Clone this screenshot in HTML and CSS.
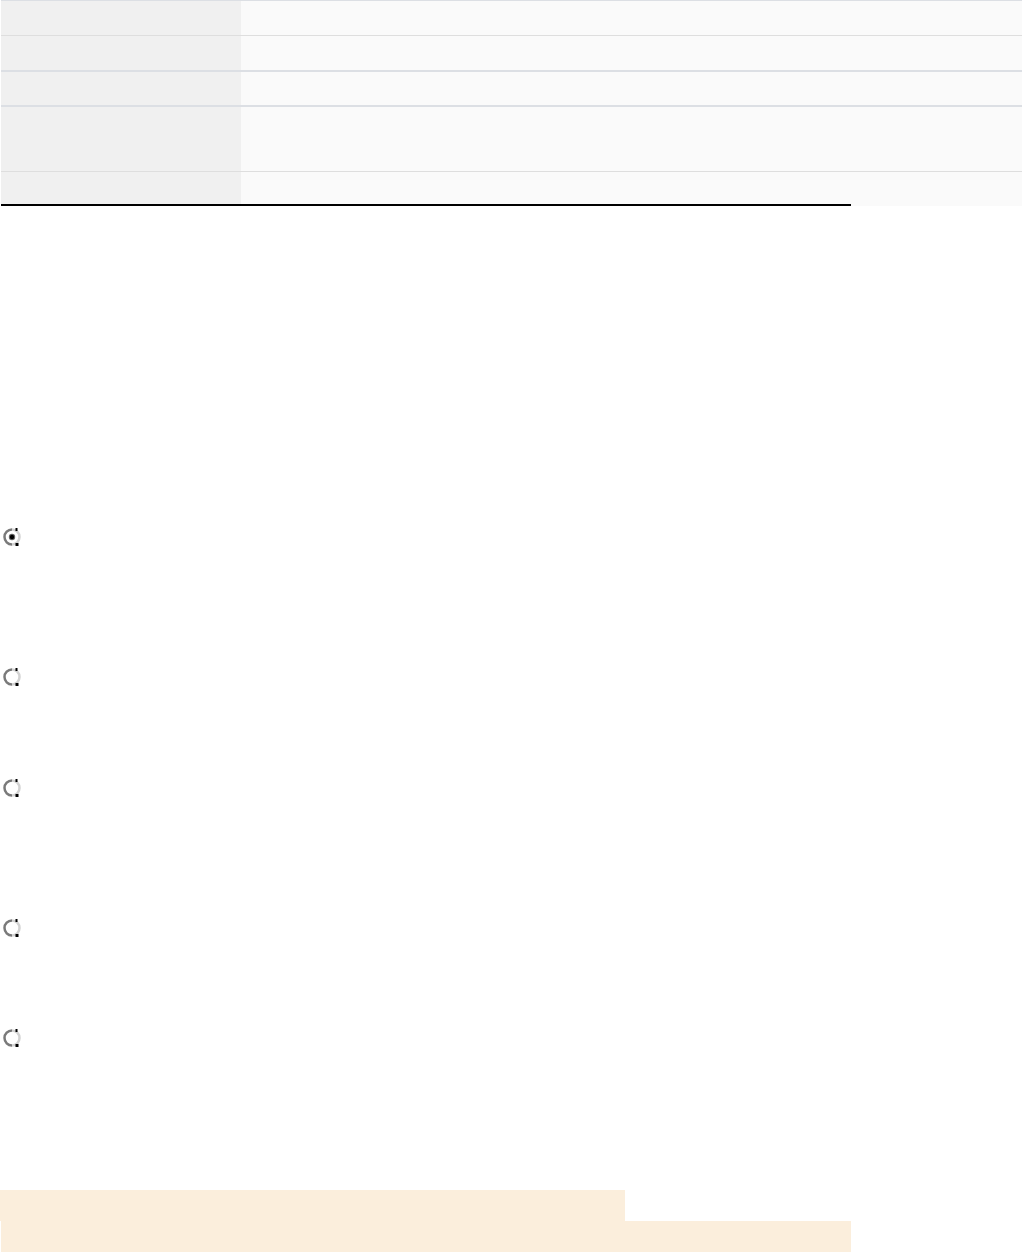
FILE: index.html
```html
<!DOCTYPE html>
<html>
<head>
<meta charset="utf-8">
<link rel="stylesheet" href="styles.css">
</head>
<body>
<div class="table">
  <div class="row r1"><div class="label"></div><div class="value"></div></div>
  <div class="row r2 thick"><div class="label"></div><div class="value"></div></div>
  <div class="row r3 thick"><div class="label"></div><div class="value"></div></div>
  <div class="row r4"><div class="label"></div><div class="value"></div></div>
  <div class="row r5 last"><div class="label"></div><div class="value"></div></div>
</div>
<div class="rule"></div>

<div class="options">
  <div class="opt tall"><svg class="radio" width="18" height="20" viewBox="0 0 18 20"><circle cx="9" cy="10" r="7.5" fill="#fff"/><path d="M9 2.5 A7.5 7.5 0 0 0 9 17.5" fill="none" stroke="#7a7a7a" stroke-width="2.5"/><path d="M9 2.5 A7.5 7.5 0 0 1 9 17.5" fill="none" stroke="#d2d2d2" stroke-width="2.5"/><rect x="12.5" y="1" width="2" height="3" fill="#000"/><rect x="12.5" y="16" width="3" height="3" fill="#000"/><circle cx="9" cy="10" r="3.2" fill="#666"/><circle cx="9" cy="10" r="2.2" fill="#000"/></svg></div>
  <div class="opt short1"><svg class="radio" width="18" height="20" viewBox="0 0 18 20"><circle cx="9" cy="10" r="7.5" fill="#fff"/><path d="M9 2.5 A7.5 7.5 0 0 0 9 17.5" fill="none" stroke="#7a7a7a" stroke-width="2.5"/><path d="M9 2.5 A7.5 7.5 0 0 1 9 17.5" fill="none" stroke="#d2d2d2" stroke-width="2.5"/><rect x="12.5" y="1" width="2" height="3" fill="#000"/><rect x="12.5" y="16" width="3" height="3" fill="#000"/></svg></div>
  <div class="opt tall"><svg class="radio" width="18" height="20" viewBox="0 0 18 20"><circle cx="9" cy="10" r="7.5" fill="#fff"/><path d="M9 2.5 A7.5 7.5 0 0 0 9 17.5" fill="none" stroke="#7a7a7a" stroke-width="2.5"/><path d="M9 2.5 A7.5 7.5 0 0 1 9 17.5" fill="none" stroke="#d2d2d2" stroke-width="2.5"/><rect x="12.5" y="1" width="2" height="3" fill="#000"/><rect x="12.5" y="16" width="3" height="3" fill="#000"/></svg></div>
  <div class="opt short2"><svg class="radio" width="18" height="20" viewBox="0 0 18 20"><circle cx="9" cy="10" r="7.5" fill="#fff"/><path d="M9 2.5 A7.5 7.5 0 0 0 9 17.5" fill="none" stroke="#7a7a7a" stroke-width="2.5"/><path d="M9 2.5 A7.5 7.5 0 0 1 9 17.5" fill="none" stroke="#d2d2d2" stroke-width="2.5"/><rect x="12.5" y="1" width="2" height="3" fill="#000"/><rect x="12.5" y="16" width="3" height="3" fill="#000"/></svg></div>
  <div class="opt final"><svg class="radio" width="18" height="20" viewBox="0 0 18 20"><circle cx="9" cy="10" r="7.5" fill="#fff"/><path d="M9 2.5 A7.5 7.5 0 0 0 9 17.5" fill="none" stroke="#7a7a7a" stroke-width="2.5"/><path d="M9 2.5 A7.5 7.5 0 0 1 9 17.5" fill="none" stroke="#d2d2d2" stroke-width="2.5"/><rect x="12.5" y="1" width="2" height="3" fill="#000"/><rect x="12.5" y="16" width="3" height="3" fill="#000"/></svg></div>
</div>

<div class="notice">
  <div class="line one"></div>
  <div class="line two"></div>
</div>
</body>
</html>
```
FILE: styles.css
```css
html, body {
  margin: 0;
  padding: 0;
  background: #fff;
  font-family: "Liberation Sans", Arial, sans-serif;
}
.table {
  margin-left: 1px;
  width: 1021px;
  border-top: 1px solid #dcdfe4;
}
.row {
  display: grid;
  grid-template-columns: 240px 1fr;
  border-bottom: 1px solid #dedede;
}
.row.thick {
  border-bottom: 2px solid #dcdfe4;
}
.row.last {
  border-bottom: none;
}
.label { background: #f0f0f0; }
.value { background: #fafafa; }
.r1 { height: 34px; }
.r2 { height: 34px; }
.r3 { height: 33px; }
.r4 { height: 64px; }
.r5 { height: 34px; }
.rule {
  margin-left: 1px;
  margin-top: -2px;
  width: 850px;
  height: 2px;
  background: #000;
  position: relative;
}
.options {
  margin-top: 321px;
  padding-left: 3px;
}
.opt { display: flex; align-items: flex-start; }
.radio { display: block; }
.tall { height: 140px; }
.short1 { height: 111px; }
.short2 { height: 110px; }
.final { height: 162px; }
.notice { display: flex; flex-direction: column; }
.line { background: #fbeedc; height: 31px; }
.line.one { width: 625px; }
.line.two { width: 850px; margin-left: 1px; }
```
